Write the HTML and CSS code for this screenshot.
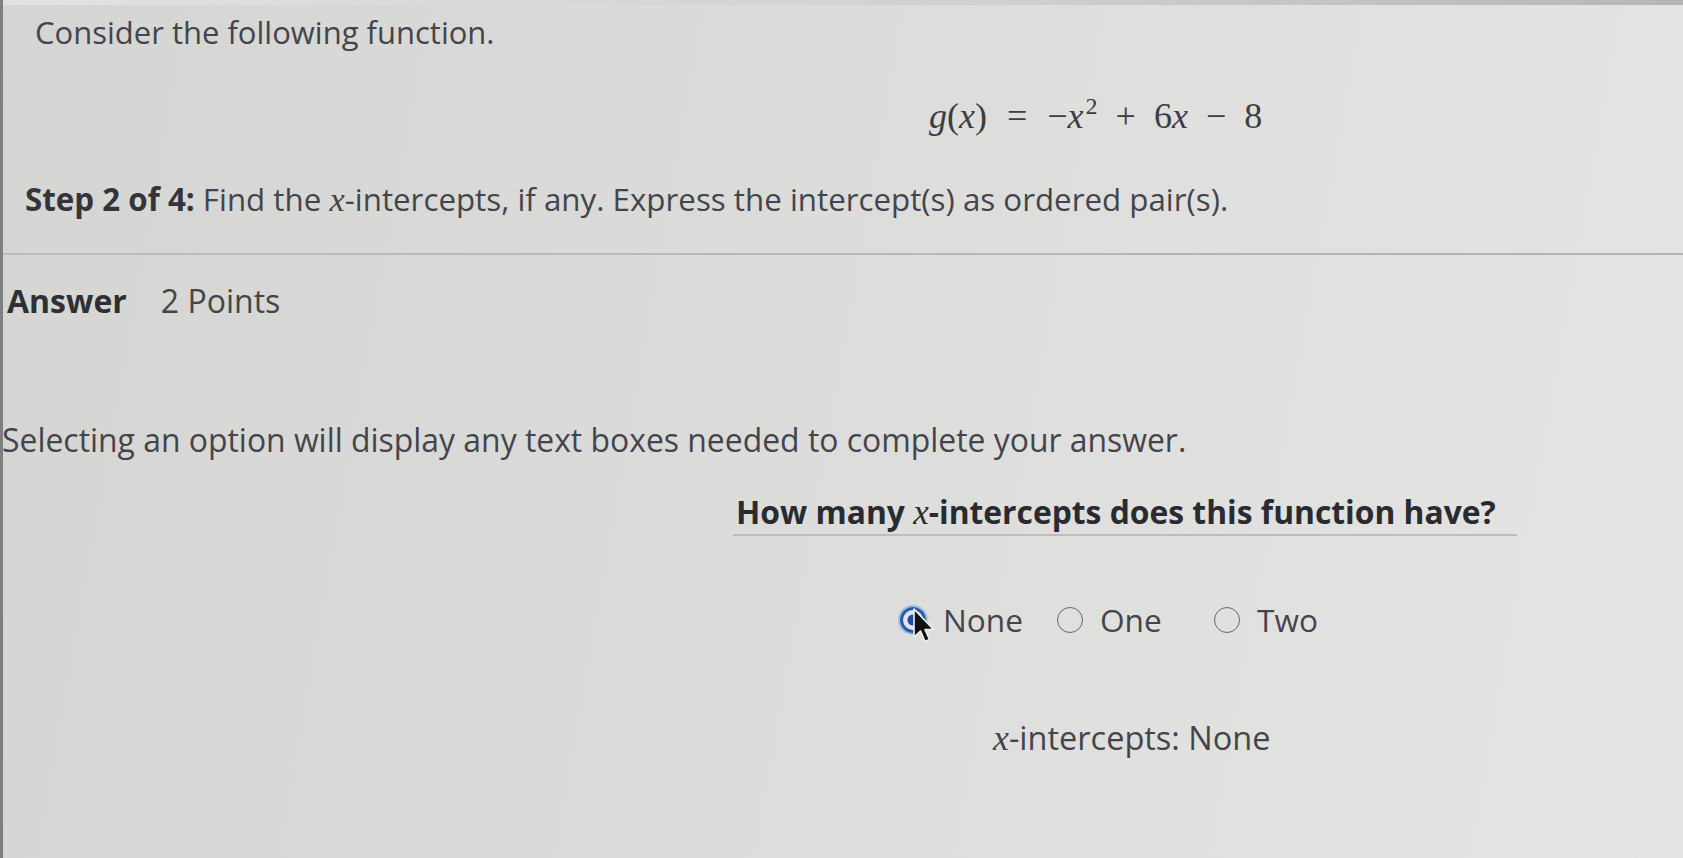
FILE: index.html
```html
<!DOCTYPE html>
<html lang="en">
<head>
<meta charset="utf-8">
<title>Step 2 of 4</title>
<link rel="stylesheet" href="styles.css">
</head>
<body>
<div class="screen">
  <div class="top-strip"></div>
  <main class="page">
    <p class="intro">Consider the following function.</p>
    <p class="equation"><i>g</i>(<i>x</i>)<span class="rel">=</span>−<i>x</i><sup>2</sup><span class="bin">+</span>6<i>x</i><span class="bin">−</span>8</p>
    <p class="step"><b>Step 2 of 4:</b> Find the <i class="var">x</i>-intercepts, if any. Express the intercept(s) as ordered pair(s).</p>
    <hr class="divider">
    <div class="answer-row">
      <span class="answer-label">Answer</span>
      <span class="points">2 Points</span>
    </div>
    <p class="hint">Selecting an option will display any text boxes needed to complete your answer.</p>
    <section class="question">
      <h2 class="question-title">How many <i class="var">x</i>-intercepts does this function have?</h2>
      <div class="options">
        <label class="option">
          <span class="radio checked"></span>
          <span class="option-text">None</span>
          <svg class="cursor" width="26" height="38" viewBox="0 0 26 38"><path d="M2 2 L2 30 L8.5 24 L13 34.5 L17.5 32.5 L13 22.5 L21.5 22.5 Z" fill="#111" stroke="#f2f2f2" stroke-width="1.6" stroke-linejoin="round"/></svg>
        </label>
        <label class="option">
          <span class="radio"></span>
          <span class="option-text">One</span>
        </label>
        <label class="option">
          <span class="radio"></span>
          <span class="option-text">Two</span>
        </label>
      </div>
      <p class="result"><i class="var">x</i>-intercepts: None</p>
    </section>
  </main>
</div>
</body>
</html>
```

FILE: styles.css
```css
* {
  box-sizing: border-box;
}

html, body {
  margin: 0;
  padding: 0;
}

body {
  width: 1683px;
  height: 858px;
  overflow: hidden;
  font-family: "Open Sans", "Noto Sans", sans-serif;
  color: #44454c;
}

.screen {
  width: 1683px;
  height: 858px;
  background: linear-gradient(100deg, #d5d5d3 0%, #dadad8 35%, #e0e0de 70%, #e4e4e2 100%);
  border-left: 3px solid #7d7f80;
  display: flex;
  flex-direction: column;
}

.top-strip {
  height: 5px;
  background: linear-gradient(90deg, #e2e2e0 0%, #d0d1cf 60%, #b4b7b5 100%);
  flex: none;
}

.page {
  display: flex;
  flex-direction: column;
}

p {
  margin: 0;
}

.intro {
  margin: 7px 0 0 32px;
  font-size: 31px;
  line-height: 40px;
}

.equation {
  margin: 44px 0 0 926px;
  font-family: "Liberation Serif", "Times New Roman", serif;
  font-size: 36px;
  line-height: 40px;
  color: #3c3d44;
  display: flex;
  align-items: baseline;
}

.equation i {
  font-style: italic;
}

.equation sup {
  font-size: 24px;
  line-height: 0;
  position: relative;
  top: -14px;
  margin-left: 2px;
}

.equation .rel {
  margin: 0 20px;
}

.equation .bin {
  margin: 0 18px;
}

.var {
  font-family: "Liberation Serif", "Times New Roman", serif;
  font-style: italic;
  font-weight: normal;
  font-size: 1.1em;
}

.step {
  margin: 43px 0 0 22px;
  font-size: 31.3px;
  line-height: 40px;
}

.step b {
  color: #34353b;
}

.divider {
  margin: 34px 0 0 0;
  border: 0;
  height: 2px;
  background: linear-gradient(90deg, #bdbdbb, #b2b3b1);
}

.answer-row {
  margin: 26px 0 0 4px;
  display: flex;
  align-items: center;
  gap: 34px;
  font-size: 32px;
  line-height: 40px;
}

.answer-label {
  font-weight: 700;
  color: #2e2f35;
}

.hint {
  margin: 99px 0 0 -1px;
  font-size: 31.9px;
  line-height: 40px;
}

.question {
  margin: 32px 0 0 730px;
  width: 784px;
  display: flex;
  flex-direction: column;
}

.question-title {
  margin: 0;
  padding: 0 0 1px 3px;
  font-size: 31.8px;
  line-height: 40px;
  font-weight: 700;
  color: #2a2b31;
  border-bottom: 2px solid #bdbebc;
}

.options {
  margin: 64px 0 0 167px;
  display: flex;
  align-items: center;
}

.option {
  position: relative;
  width: 157px;
  display: flex;
  align-items: center;
  gap: 17px;
  font-size: 31.6px;
  line-height: 40px;
}

.radio {
  width: 26px;
  height: 26px;
  border-radius: 50%;
  border: 1.5px solid #66676c;
  flex: none;
}

.radio.checked {
  border: 3px solid #2b5aa8;
  background: radial-gradient(circle, #1f4c9c 0 5px, #dfe6ef 6px);
  box-shadow: 0 0 0 2px #9cc0e6;
}

.cursor {
  position: absolute;
  left: 12px;
  top: 7px;
}

.result {
  margin: 78px 0 0 260px;
  font-size: 32.5px;
  line-height: 40px;
}
```
